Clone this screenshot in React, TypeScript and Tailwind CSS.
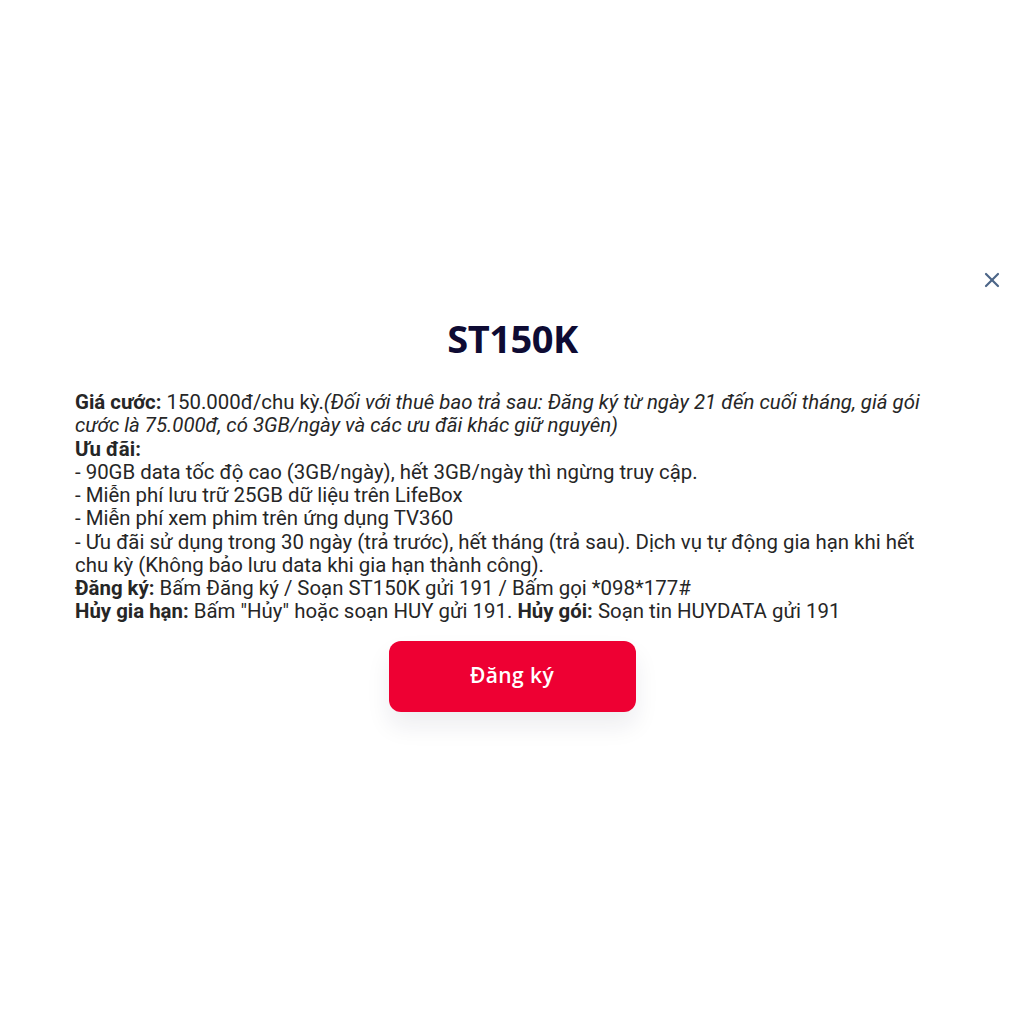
import { X } from "lucide-react";

function PackageModal() {
  return (
    <div className="relative h-[513px] w-full bg-white pl-[75px] pr-[80px] pt-[62px]">
      <button className="absolute right-[20px] top-[13px] flex h-[24px] w-[24px] items-center justify-center text-[#4d6688]">
        <X size={26} strokeWidth={2.2} />
      </button>
      <h2 className="pl-[6px] text-center font-['Open_Sans',sans-serif] text-[38px] font-bold leading-[42px] tracking-[-0.5px] text-[#0e0b33]">
        ST150K
      </h2>
      <div className="mt-[32px] font-['Roboto',sans-serif] text-[20.4px] leading-[23.25px] text-[#262626]">
        <p>
          <b>Giá cước:</b> 150.000đ/chu kỳ.
          <i>
            (Đối với thuê bao trả sau: Đăng ký từ ngày 21 đến cuối tháng, giá gói cước là 75.000đ, có
            3GB/ngày và các ưu đãi khác giữ nguyên)
          </i>
        </p>
        <p>
          <b>Ưu đãi:</b>
        </p>
        <p>- 90GB data tốc độ cao (3GB/ngày), hết 3GB/ngày thì ngừng truy cập.</p>
        <p>- Miễn phí lưu trữ 25GB dữ liệu trên LifeBox</p>
        <p>- Miễn phí xem phim trên ứng dụng TV360</p>
        <p>
          - Ưu đãi sử dụng trong 30 ngày (trả trước), hết tháng (trả sau). Dịch vụ tự động gia hạn khi
          hết chu kỳ (Không bảo lưu data khi gia hạn thành công).
        </p>
        <p>
          <b>Đăng ký:</b> Bấm Đăng ký / Soạn ST150K gửi 191 / Bấm gọi *098*177#
        </p>
        <p>
          <b>Hủy gia hạn:</b> Bấm "Hủy" hoặc soạn HUY gửi 191. <b>Hủy gói:</b> Soạn tin HUYDATA gửi 191
        </p>
      </div>
      <div className="mt-[17px] flex justify-center pl-[5px]">
        <button className="h-[71px] w-[247px] rounded-[12px] bg-[#ee0033] font-['Open_Sans',sans-serif] text-[21px] font-semibold tracking-[0.4px] text-white shadow-[0_14px_24px_rgba(20,30,60,0.08)]">
          Đăng ký
        </button>
      </div>
    </div>
  );
}

export default function App() {
  return (
    <div className="h-[1024px] w-full bg-white pt-[255px]">
      <PackageModal />
    </div>
  );
}
